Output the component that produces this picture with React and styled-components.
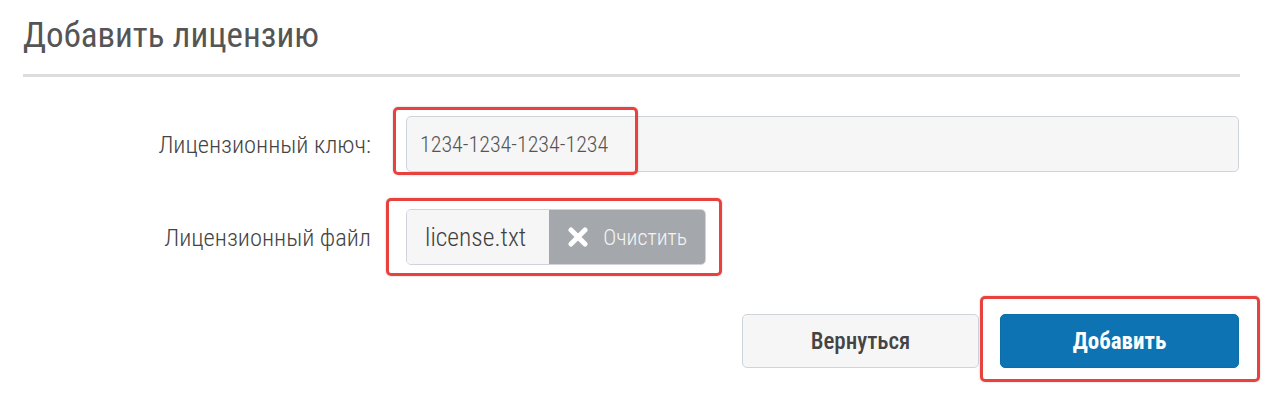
import React from 'react'
import styled, { createGlobalStyle, css } from 'styled-components'

const GlobalStyle = createGlobalStyle`
  html, body {
    margin: 0;
    padding: 0;
    background: #fff;
  }
  body {
    font-family: 'Roboto Condensed', Roboto, 'Liberation Sans', sans-serif;
    font-stretch: 75%;
    color: #444;
  }
`

const Page = styled.div`
  width: 1240px;
  min-height: 401px;
  box-sizing: border-box;
  padding: 14px 0 0 23px;
`

const Header = styled.div`
  padding-bottom: 16px;
  border-bottom: 3px solid #dddddd;
`

const Title = styled.h1`
  margin: 0;
  font-size: 35px;
  line-height: 44px;
  font-weight: 400;
  color: #555;
`

const Form = styled.form`
  display: grid;
  grid-template-columns: 383px 1fr;
  row-gap: 37px;
  align-items: center;
  margin-top: 39px;
`

const Label = styled.label`
  text-align: right;
  padding-right: 35px;
  font-size: 24.5px;
  font-weight: 300;
  color: #444;
`

const Field = styled.div`
  position: relative;
  display: flex;
  padding-right: 1px;
`

// red annotation frame drawn over a control
const Mark = styled.span`
  position: absolute;
  top: ${p => p.$top}px;
  left: ${p => p.$left}px;
  width: ${p => p.$w}px;
  height: ${p => p.$h}px;
  box-sizing: border-box;
  border: 3px solid #e8423f;
  border-radius: 5px;
  box-shadow: 0 0 2px rgba(0, 0, 0, 0.25);
  pointer-events: none;
`

const Input = styled.input`
  flex: 1;
  height: 56px;
  box-sizing: border-box;
  padding: 0 13px;
  border: 1px solid #cfd3da;
  border-radius: 5px;
  background: #f6f6f6;
  font-family: inherit;
  font-stretch: 75%;
  font-size: 22px;
  font-weight: 300;
  color: #555;
  outline: none;
`

const FileGroup = styled.div`
  display: inline-flex;
  height: 56px;
  box-sizing: border-box;
  border: 1px solid #d0d4da;
  border-radius: 5px;
  overflow: hidden;
`

const FileName = styled.div`
  display: flex;
  align-items: center;
  padding: 0 23px 0 18px;
  background: #f6f6f6;
  font-size: 25.5px;
  font-weight: 300;
  color: #3f3f3f;
`

const ClearButton = styled.button`
  display: flex;
  align-items: center;
  gap: 15px;
  padding: 0 18px 0 19px;
  border: 0;
  background: #a4a8ac;
  font-family: inherit;
  font-stretch: 75%;
  font-size: 22px;
  font-weight: 300;
  color: #f4f4f4;
  cursor: pointer;
`

const Actions = styled.div`
  display: flex;
  justify-content: flex-end;
  gap: 21px;
  margin-top: 49px;
  padding-right: 1px;
`

const Slot = styled.div`
  position: relative;
`

const Button = styled.button`
  width: 237px;
  height: 54px;
  border-radius: 5px;
  font-family: inherit;
  font-stretch: 75%;
  font-size: 23px;
  cursor: pointer;
  ${p =>
    p.$primary
      ? css`
          width: 239px;
          border: 1px solid #0b6ea9;
          background: #0d73b2;
          color: #fff;
          font-weight: 700;
        `
      : css`
          border: 1px solid #cfd3da;
          background: #f6f6f6;
          color: #444;
          font-weight: 500;
        `}
`

const CrossIcon = () => (
  <svg width='20' height='20' viewBox='0 0 20 20'>
    <path d='M3 3 L17 17 M17 3 L3 17' stroke='#fff' strokeWidth='5' strokeLinecap='round' />
  </svg>
)

export default function App () {
  return (
    <Page>
      <GlobalStyle />
      <Header>
        <Title>Добавить лицензию</Title>
      </Header>
      <Form onSubmit={e => e.preventDefault()}>
        <Label htmlFor='key'>Лицензионный ключ:</Label>
        <Field>
          <Input id='key' defaultValue='1234-1234-1234-1234' />
          <Mark $top={-9} $left={-13} $w={245} $h={68} />
        </Field>
        <Label>Лицензионный файл</Label>
        <Field>
          <FileGroup>
            <FileName>license.txt</FileName>
            <ClearButton type='button'>
              <CrossIcon />
              Очистить
            </ClearButton>
          </FileGroup>
          <Mark $top={-11} $left={-20} $w={336} $h={78} />
        </Field>
      </Form>
      <Actions>
        <Button type='button'>Вернуться</Button>
        <Slot>
          <Button type='submit' $primary>Добавить</Button>
          <Mark $top={-18} $left={-20} $w={280} $h={86} />
        </Slot>
      </Actions>
    </Page>
  )
}
